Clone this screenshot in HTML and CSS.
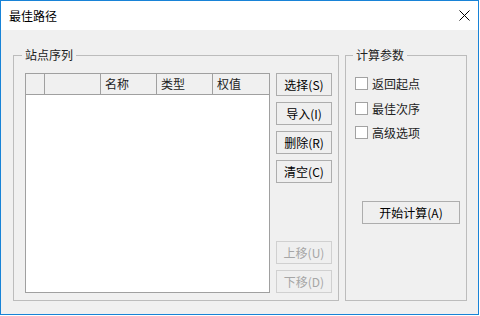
FILE: index.html
```html
<!DOCTYPE html>
<html lang="zh-CN">
<head>
  <meta charset="UTF-8" />
  <meta name="viewport" content="width=device-width, initial-scale=1.0"/>
  <title>最佳路径</title>
  <link rel="stylesheet" href="styles.css">
</head>
<body>
  <div class="window">
    <div class="titlebar">
      <span class="title">最佳路径</span>
      <svg class="close" width="11" height="11" viewBox="0 0 11 11">
        <path d="M0.5 0.5L10.5 10.5M10.5 0.5L0.5 10.5" stroke="#000" stroke-width="1"/>
      </svg>
    </div>

    <div class="content">
      <fieldset class="group group-stations">
        <legend>站点序列</legend>
        <div class="stations">
          <div class="list">
            <div class="list-header">
              <div class="col col-mark"></div>
              <div class="col"></div>
              <div class="col">名称</div>
              <div class="col">类型</div>
              <div class="col col-last">权值</div>
            </div>
            <div class="list-body"></div>
          </div>
          <div class="side-buttons">
            <button class="btn">选择(S)</button>
            <button class="btn">导入(I)</button>
            <button class="btn">删除(R)</button>
            <button class="btn">清空(C)</button>
            <button class="btn btn-push" disabled>上移(U)</button>
            <button class="btn" disabled>下移(D)</button>
          </div>
        </div>
      </fieldset>

      <fieldset class="group group-params">
        <legend>计算参数</legend>
        <div class="params">
          <label class="check"><input type="checkbox" /> 返回起点</label>
          <label class="check"><input type="checkbox" /> 最佳次序</label>
          <label class="check"><input type="checkbox" /> 高级选项</label>
          <button class="btn btn-run">开始计算(A)</button>
        </div>
      </fieldset>
    </div>
  </div>
</body>
</html>
```

FILE: styles.css
```css
* {
  box-sizing: border-box;
}

body {
  margin: 0;
  background: #fff;
  font-family: "Noto Sans CJK SC", "Microsoft YaHei", sans-serif;
  font-size: 12px;
  color: #000;
}

.window {
  width: 479px;
  height: 315px;
  border: 1px solid #1883d7;
  background: #f0f0f0;
  display: flex;
  flex-direction: column;
}

.titlebar {
  height: 29px;
  background: #fff;
  display: flex;
  align-items: center;
  justify-content: space-between;
  padding: 0 8px;
}

.title {
  line-height: 16px;
}

.close {
  display: block;
}

.content {
  display: flex;
  gap: 6px;
  padding: 17px 0 0 12px;
}

.group {
  margin: 0;
  border: 1px solid #bcbcbc;
  min-width: 0;
}

.group legend {
  padding: 0 3px;
  margin-left: -3px;
  line-height: 16px;
  color: #222;
}

.group-stations {
  width: 326px;
  padding: 10px 6px 7px 11px;
}

.group-params {
  width: 122px;
  padding: 10px 6px 7px 9px;
}

.group-params legend {
  margin-left: -2px;
}

/* station list */
.stations {
  display: flex;
  gap: 6px;
}

.list {
  width: 245px;
  height: 220px;
  border: 1px solid #a0a0a0;
  background: #fff;
  display: flex;
  flex-direction: column;
}

.list-header {
  height: 21px;
  display: flex;
  background: #f0f0f0;
  border-bottom: 1px solid #a0a0a0;
}

.col {
  width: 56px;
  padding-left: 4px;
  line-height: 20px;
  border-right: 1px solid #a0a0a0;
  color: #222;
}

.col-mark {
  width: 19px;
}

.col-last {
  flex: 1;
  border-right: none;
}

.list-body {
  flex: 1;
}

/* buttons */
.btn {
  height: 23px;
  padding: 0;
  border: 1px solid #adadad;
  background: #efefef;
  font-family: inherit;
  font-size: 12px;
  color: #000;
}

.btn:disabled {
  border-color: #d0d0d0;
  color: #a6a6a6;
}

.side-buttons {
  width: 56px;
  display: flex;
  flex-direction: column;
  gap: 6px;
}

.side-buttons .btn {
  width: 56px;
}

.btn-push {
  margin-top: auto;
}

/* parameters */
.params {
  display: flex;
  flex-direction: column;
  gap: 7.5px;
  padding-top: 2px;
}

.check {
  display: flex;
  align-items: center;
  gap: 4px;
  height: 17px;
  color: #222;
}

.check input {
  appearance: none;
  -webkit-appearance: none;
  width: 13px;
  height: 13px;
  margin: 0;
  border: 1px solid #a2a2a2;
  background: #fff;
}

.btn-run {
  width: 98px;
  margin: 52.5px 0 0 7px;
}
```
